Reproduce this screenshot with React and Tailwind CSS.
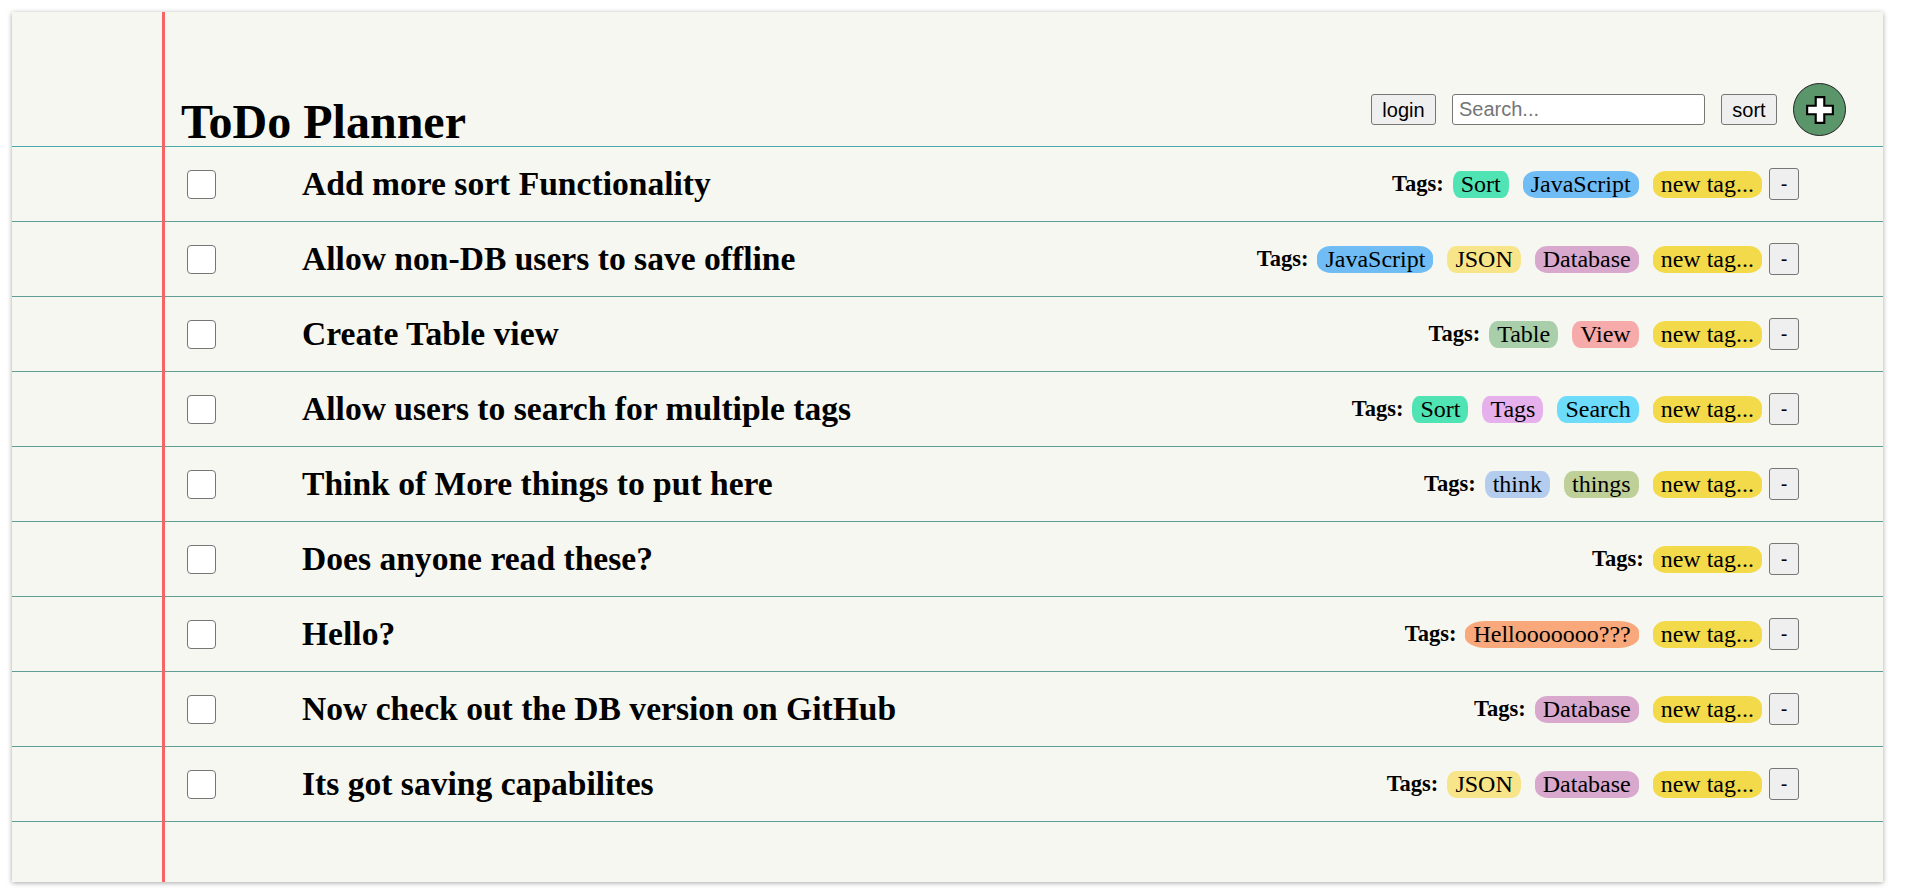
import React from "react";

const todos = [
  { text: "Add more sort Functionality", tags: ["Sort", "JavaScript"] },
  { text: "Allow non-DB users to save offline", tags: ["JavaScript", "JSON", "Database"] },
  { text: "Create Table view", tags: ["Table", "View"] },
  { text: "Allow users to search for multiple tags", tags: ["Sort", "Tags", "Search"] },
  { text: "Think of More things to put here", tags: ["think", "things"] },
  { text: "Does anyone read these?", tags: [] },
  { text: "Hello?", tags: ["Hellooooooo???"] },
  { text: "Now check out the DB version on GitHub", tags: ["Database"] },
  { text: "Its got saving capabilites", tags: ["JSON", "Database"] },
];

// tag colours picked from the screenshot
const tagColors = {
  Sort: "bg-[#50e3b4]",
  JavaScript: "bg-[#6fbdf4]",
  JSON: "bg-[#f8e589]",
  Database: "bg-[#d8a9cd]",
  Table: "bg-[#a8cfaa]",
  View: "bg-[#f6aaa9]",
  Tags: "bg-[#e5b0ec]",
  Search: "bg-[#6ddcfb]",
  think: "bg-[#b4cdef]",
  things: "bg-[#bfcf98]",
  "Hellooooooo???": "bg-[#f8a87b]",
};

function Tag({ label, color }) {
  return (
    <span
      className={`h-[27px] px-[8px] flex items-center rounded-[12%/40%] text-[24px] leading-none text-black ${color}`}
    >
      {label}
    </span>
  );
}

function TodoRow({ todo }) {
  return (
    <div className="h-[75px] border-b border-[#5f9e96] flex items-center pl-[175px] pr-[84px]">
      <span className="w-[29px] h-[29px] shrink-0 bg-white border-[1.5px] border-[#767676] rounded-[4px]" />
      <span className="ml-[86px] text-[33.6px] leading-none font-bold text-black">{todo.text}</span>
      <div className="ml-auto flex items-center">
        <span className="mr-[9px] text-[22.5px] leading-none font-bold">Tags:</span>
        <div className="flex items-center gap-[14px]">
          {todo.tags.map((t, i) => (
            <Tag key={i} label={t} color={tagColors[t]} />
          ))}
          <Tag label="new tag..." color="bg-[#f3da4b]" />
        </div>
        <button className="ml-[7px] w-[30px] h-[32px] bg-[#efefef] border border-[#767676] rounded-[3px] font-['Liberation_Sans',sans-serif] text-[20px] leading-none text-black">
          -
        </button>
      </div>
    </div>
  );
}

export default function App() {
  return (
    <div className="h-[895px] overflow-y-scroll bg-white [&::-webkit-scrollbar]:w-[23px] [&::-webkit-scrollbar-track]:bg-[#f1f1f1] [&::-webkit-scrollbar-thumb]:bg-[#c1c1c1] [&::-webkit-scrollbar-thumb]:border-x-[3px] [&::-webkit-scrollbar-thumb]:border-[#f1f1f1]">
      <div className="min-h-[905px] pt-[12px] pl-[12px] font-['Liberation_Serif',serif]">
        <div className="relative w-[1871px] h-[870px] bg-[#f7f7f2] shadow-[0_1px_5px_rgba(0,0,0,0.35)]">
          {/* red margin line of the paper */}
          <div className="absolute top-0 bottom-0 left-[150px] w-[3px] bg-[#f66565] z-10" />

          <header className="h-[135px] border-b border-[#48aaaa] flex items-end pl-[169px] pr-[37px]">
            <h1 className="text-[48px] leading-none font-bold text-black">ToDo Planner</h1>
            <div className="ml-auto mb-[10px] flex items-center font-['Liberation_Sans',sans-serif] text-[20px]">
              <button className="w-[65px] h-[31px] bg-[#efefef] border border-[#767676] rounded-[3px] text-black">
                login
              </button>
              <input
                placeholder="Search..."
                className="ml-[16px] w-[253px] h-[31px] px-[6px] bg-white border border-[#767676] rounded-[3px] text-black placeholder:text-[#757575] outline-none"
              />
              <button className="ml-[16px] w-[56px] h-[31px] bg-[#efefef] border border-[#767676] rounded-[3px] text-black">
                sort
              </button>
              <button className="ml-[16px] w-[53px] h-[53px] rounded-full bg-[#5a9669] border border-[#222] flex items-center justify-center">
                <svg width="30" height="30" viewBox="0 0 28 28">
                  <polygon
                    points="10,2 18,2 18,10 26,10 26,18 18,18 18,26 10,26 10,18 2,18 2,10 10,10"
                    fill="white"
                    stroke="black"
                    strokeWidth="2"
                    strokeLinejoin="miter"
                  />
                </svg>
              </button>
            </div>
          </header>

          {todos.map((todo, i) => (
            <TodoRow key={i} todo={todo} />
          ))}
        </div>
      </div>
    </div>
  );
}
